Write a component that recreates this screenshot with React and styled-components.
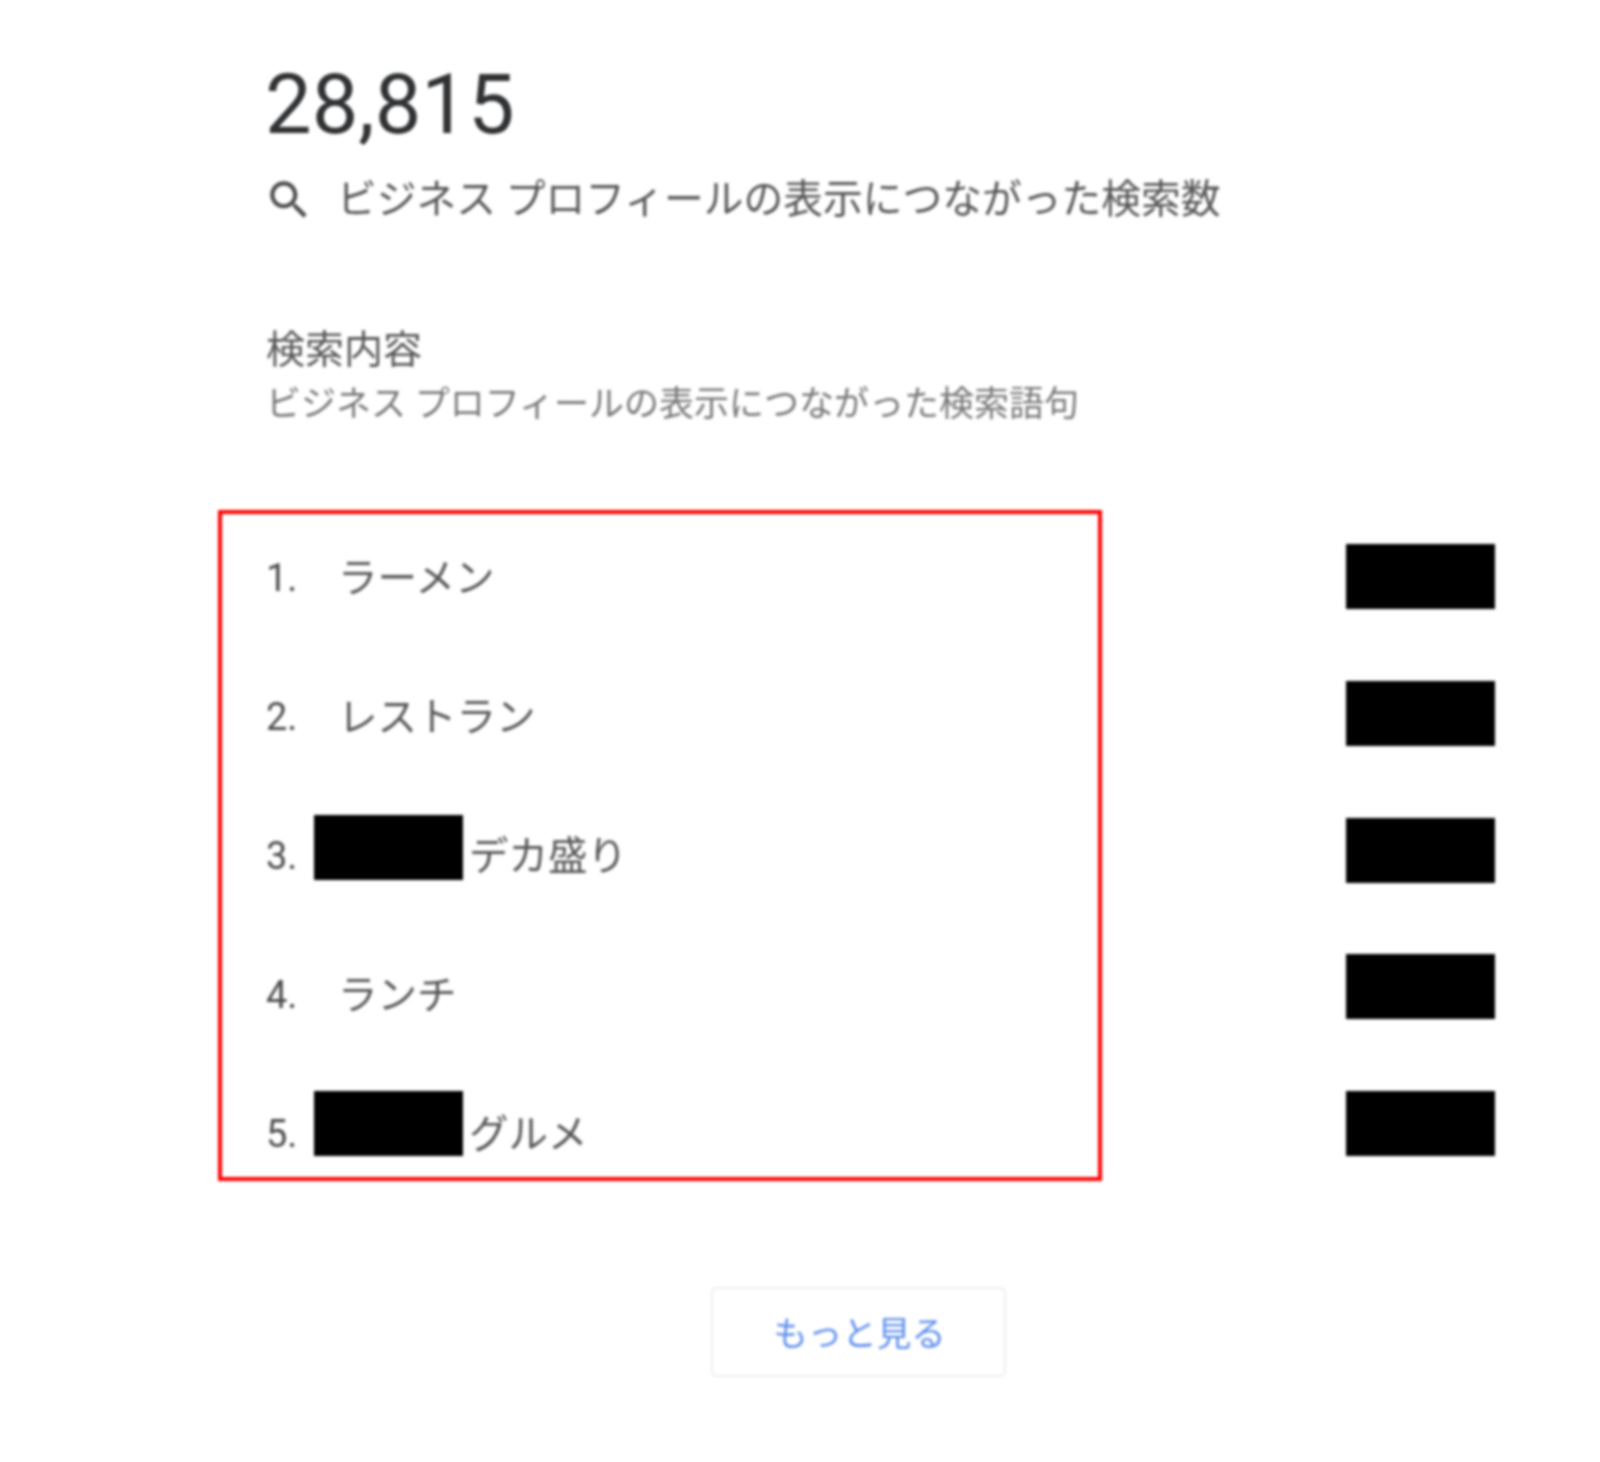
import React from 'react';
import styled, { createGlobalStyle } from 'styled-components';

const rows = [
  { id: 1, label: 'ラーメン' },
  { id: 2, label: 'レストラン' },
  { id: 3, label: 'デカ盛り', redacted: true, lift: 12 },
  { id: 4, label: 'ランチ' },
  { id: 5, label: 'グルメ', redacted: true, lift: 16 },
];

const App = () => {
  return (
    <>
      <GlobalStyle />
      <Page>
        <Header>
          <Total>28,815</Total>
          <TotalCaption>
            <SearchIcon viewBox="0 0 24 24">
              <path d="M15.5 14h-.79l-.28-.27C15.41 12.59 16 11.11 16 9.5 16 5.91 13.09 3 9.5 3S3 5.91 3 9.5 5.91 16 9.5 16c1.61 0 3.09-.59 4.23-1.57l.27.28v.79l5 4.99L20.49 19l-4.99-5zm-6 0C7.01 14 5 11.99 5 9.5S7.01 5 9.5 5 14 7.01 14 9.5 11.99 14 9.5 14z" />
            </SearchIcon>
            ビジネス プロフィールの表示につながった検索数
          </TotalCaption>
          <SectionTitle>検索内容</SectionTitle>
          <SectionNote>ビジネス プロフィールの表示につながった検索語句</SectionNote>
        </Header>

        <Results>
          <TermBox>
            {rows.map((row) => (
              <TermRow key={row.id}>
                <TermNumber>{row.id}.</TermNumber>
                {row.redacted && <InlineMask $lift={row.lift} />}
                <TermLabel $indent={!row.redacted}>{row.label}</TermLabel>
              </TermRow>
            ))}
          </TermBox>
          <Counts>
            {rows.map((row) => (
              <CountMask key={row.id} />
            ))}
          </Counts>
        </Results>

        <MoreButton>もっと見る</MoreButton>
      </Page>
    </>
  );
};

export default App;

const GlobalStyle = createGlobalStyle`
  html, body {
    margin: 0;
    padding: 0;
    background: #fff;
  }
`;

const Page = styled.div`
  width: 1600px;
  height: 1462px;
  box-sizing: border-box;
  padding: 63px 0 0 218px;
  overflow: hidden;
  font-family: Roboto, "Noto Sans CJK JP", sans-serif;
  color: #555;
  filter: blur(1.4px);
`;

const Header = styled.div`
  display: flex;
  flex-direction: column;
  padding-left: 48px;
`;

const Total = styled.div`
  margin-left: -1px;
  font-size: 83px;
  line-height: 84px;
  color: #2f3133;
`;

const TotalCaption = styled.div`
  display: flex;
  align-items: center;
  gap: 23px;
  margin: 29px 0 0 -2px;
  height: 48px;
  font-size: 39.75px;
  line-height: 48px;
  white-space: nowrap;
`;

const SearchIcon = styled.svg`
  width: 50px;
  height: 50px;
  flex: none;
  fill: #4a4a4a;
`;

const SectionTitle = styled.div`
  margin-top: 102px;
  font-size: 39px;
  line-height: 48px;
`;

const SectionNote = styled.div`
  margin-top: 9px;
  font-size: 35px;
  line-height: 44px;
  color: #777;
  white-space: nowrap;
`;

const Results = styled.div`
  display: flex;
  align-items: flex-start;
  margin-top: 83px;
`;

const TermBox = styled.div`
  box-sizing: border-box;
  width: 884px;
  height: 671px;
  border: 4px solid #ff0000;
  padding: 23px 0 0 44px;
  display: flex;
  flex-direction: column;
  gap: 63px;
`;

const TermRow = styled.div`
  display: flex;
  align-items: center;
  height: 76px;
  font-size: 39.5px;
  white-space: nowrap;
`;

const TermNumber = styled.span`
  width: 48px;
  flex: none;
  padding-top: 6px;
  font-size: 38px;
  color: #4a4a4a;
`;

const InlineMask = styled.div`
  width: 149px;
  height: 65px;
  flex: none;
  margin: 0 6px ${(props) => props.$lift}px 0;
  background: #000;
`;

const TermLabel = styled.span`
  padding-left: ${(props) => (props.$indent ? '24px' : '0')};
  padding-bottom: 2px;
`;

const Counts = styled.div`
  display: flex;
  flex-direction: column;
  gap: 71.75px;
  margin: 34px 0 0 244px;
`;

const CountMask = styled.div`
  width: 149px;
  height: 65px;
  background: #000;
`;

const MoreButton = styled.button`
  display: block;
  box-sizing: border-box;
  width: 295px;
  height: 90px;
  margin: 106px 0 0 493px;
  padding: 0 0 3px 2px;
  background: #fff;
  border: 2px solid #eceef0;
  border-radius: 6px;
  font-family: "Noto Sans CJK JP", sans-serif;
  font-size: 34.5px;
  color: #5f8fec;
`;
